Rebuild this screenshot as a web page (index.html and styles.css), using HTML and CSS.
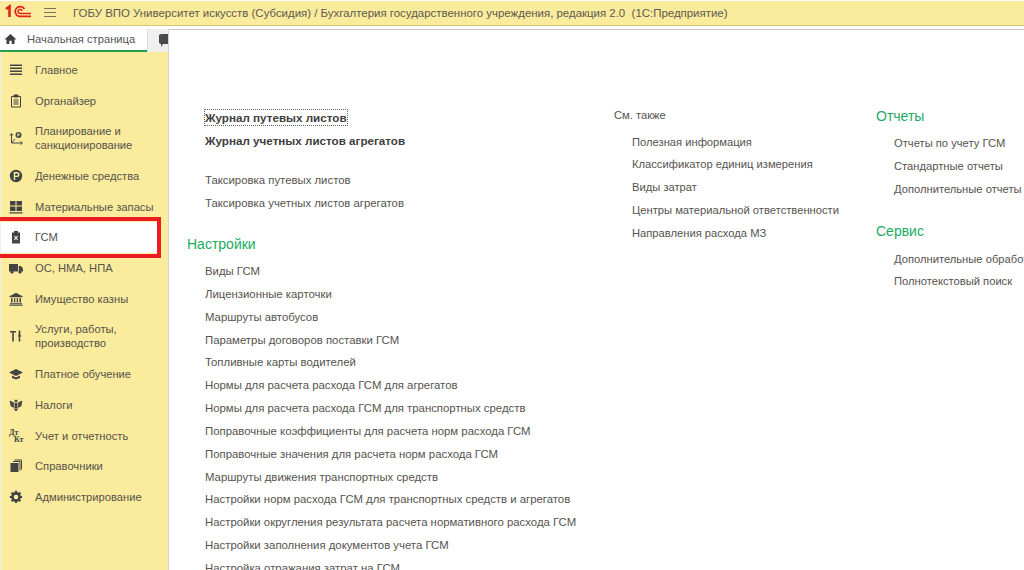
FILE: index.html
```html
<!DOCTYPE html>
<html lang="ru">
<head>
  <meta charset="UTF-8">
  <title>Бухгалтерия государственного учреждения</title>
  <link rel="stylesheet" href="styles.css">
</head>
<body>
  <header class="titlebar">
    <svg class="logo" width="27" height="17" viewBox="0 0 27 17" fill="none" stroke="#e2231a">
      <path d="M1 5 L4.5 2.5 V13" stroke-width="2.6"/>
      <path d="M19.5 5 A5 5 0 1 0 14 12.4 H26" stroke-width="1.7"/>
      <path d="M17 7 A2 2 0 1 0 14.5 9.4 H26" stroke-width="1.5"/>
    </svg>
    <svg class="burger" width="14" height="11" viewBox="0 0 14 11" stroke="#77725a" stroke-width="1.2">
      <path d="M1 1.5H13M1 5.5H13M1 9.5H13"/>
    </svg>
    <span class="title">ГОБУ ВПО Университет искусств (Субсидия) / Бухгалтерия государственного учреждения, редакция 2.0&nbsp; (1С:Предприятие)</span>
  </header>

  <div class="workspace">
    <aside class="left">
      <div class="tabs">
        <div class="tab-home">
          <svg width="13" height="12" viewBox="0 0 13 12" fill="#3f3f3f"><path d="M6.5 1 L12.5 6.5 H10.5 V11 H7.7 V7.8 H5.3 V11 H2.5 V6.5 H.5Z"/></svg>
          <span>Начальная страница</span>
        </div>
        <div class="tab-other">
          <svg width="10" height="15" viewBox="0 0 10 15" fill="#4a4a4a"><path d="M1 2 L3 1 H10 V11 H5 L3 14 V11 L1 10Z"/></svg>
        </div>
      </div>

      <nav class="sections">
        <a class="section">
          <svg viewBox="0 0 14 14" fill="#444"><path d="M1 1.5H13V3H1ZM1 4.5H13V6H1ZM1 7.5H13V9H1ZM1 10.5H13V12H1Z"/></svg>
          <span>Главное</span>
        </a>
        <a class="section">
          <svg viewBox="0 0 14 14" fill="none" stroke="#444" stroke-width="1"><path d="M2.5 2.5H11.5V13H2.5ZM4.5 6H9.5M4.5 8H9.5M4.5 10H9.5"/><path d="M5 1H9V3H5Z" fill="#444"/></svg>
          <span>Органайзер</span>
        </a>
        <a class="section">
          <svg viewBox="0 0 14 14" fill="none" stroke="#444" stroke-width="1"><path d="M2.5 3V12H13M1 4.5L2.5 2.5L4 4.5M11.5 10.5L13.5 12L11.5 13.5M2.5 12L6 8"/><circle cx="9.5" cy="4" r="3" fill="#444" stroke="none"/><path d="M8.7 5.6V2.8H10.3V4.2H8.7" stroke="#fbeb9c" stroke-width=".8"/></svg>
          <span>Планирование и<br>санкционирование</span>
        </a>
        <a class="section">
          <svg viewBox="0 0 14 14"><circle cx="7" cy="7" r="6.2" fill="#444"/><path d="M5.5 11V3.8H8A1.8 1.8 0 0 1 8 7.4H5.5" fill="none" stroke="#fbeb9c" stroke-width="1.4"/></svg>
          <span>Денежные средства</span>
        </a>
        <a class="section">
          <svg viewBox="0 0 14 14" fill="#444"><path d="M1 1H6.5V5.6H1ZM7.5 1H13V5.6H7.5ZM1 6.6H6.5V11H1ZM7.5 6.6H13V11H7.5ZM.5 12.2H13.5V13.4H.5Z"/></svg>
          <span>Материальные запасы</span>
        </a>
        <a class="section current">
          <svg viewBox="0 0 14 14"><path d="M3 2.5H5V1H9V2.5H11V13.5H3Z" fill="#444"/><path d="M5.3 6L8.7 10M8.7 6L5.3 10" stroke="#fff" stroke-width="1.1"/></svg>
          <span>ГСМ</span>
        </a>
        <a class="section">
          <svg viewBox="0 0 14 14" fill="#444"><path d="M0 3H9V10.5H0ZM9.8 5H12L14 7.4V10.5H9.8Z"/><circle cx="3" cy="11" r="1.6"/><circle cx="11" cy="11" r="1.6"/></svg>
          <span>ОС, НМА, НПА</span>
        </a>
        <a class="section">
          <svg viewBox="0 0 14 14" fill="#444"><path d="M7 .8L13.5 4.2V5.2H.5V4.2Z"/><path d="M2 6.2H3.6V10.5H2ZM5 6.2H6.3V10.5H5ZM7.7 6.2H9V10.5H7.7ZM10.4 6.2H12V10.5H10.4ZM1 11.2H13V12.2H1ZM.3 12.8H13.7V13.8H.3Z"/></svg>
          <span>Имущество казны</span>
        </a>
        <a class="section">
          <svg viewBox="0 0 14 14" fill="none" stroke="#444" stroke-width="1.6"><path d="M1 2.8H7M4 2.8V12.5M10.5 1.5V6M10.5 8.5V12.5"/><circle cx="10.5" cy="7" r="1.4" fill="#444" stroke="none"/></svg>
          <span>Услуги, работы,<br>производство</span>
        </a>
        <a class="section">
          <svg viewBox="0 0 14 14" fill="#444"><path d="M7 2L14 5.5L7 9L0 5.5ZM3 8.4L7 10.4L11 8.4V11L7 12.6L3 11Z"/></svg>
          <span>Платное обучение</span>
        </a>
        <a class="section">
          <svg viewBox="0 0 14 14" fill="#444"><path d="M5.6 1.2L7 2.6L8.4 1.2V4H5.6ZM.6 2.5L4.8 4.6V10L1.6 8ZM13.4 2.5L9.2 4.6V10L12.4 8ZM5.5 4.8H8.5V10H5.5ZM4.5 10.5H9.5L7 13.5Z"/></svg>
          <span>Налоги</span>
        </a>
        <a class="section">
          <span class="dtkt">Дт<br><i>Кт</i></span>
          <span>Учет и отчетность</span>
        </a>
        <a class="section">
          <svg viewBox="0 0 14 14"><path d="M5.5 1H12.5V10.5" fill="none" stroke="#444"/><path d="M4 2.5H11V11.5" fill="none" stroke="#444"/><path d="M1.5 4H9.5V13H1.5Z" fill="#444"/></svg>
          <span>Справочники</span>
        </a>
        <a class="section">
          <svg viewBox="0 0 14 14"><circle cx="7" cy="7" r="3.6" fill="none" stroke="#444" stroke-width="2.6"/><path d="M7 .8V13.2M.8 7H13.2M2.6 2.6L11.4 11.4M11.4 2.6L2.6 11.4" stroke="#444" stroke-width="2.2" stroke-dasharray="2.2 7.9"/></svg>
          <span>Администрирование</span>
        </a>
      </nav>
    </aside>

    <main class="content">
      <div class="col col-main">
        <div class="links">
          <a class="link strong focused">Журнал путевых листов</a>
          <a class="link strong">Журнал учетных листов агрегатов</a>
        </div>
        <div class="links gap-top">
          <a class="link">Таксировка путевых листов</a>
          <a class="link">Таксировка учетных листов агрегатов</a>
        </div>
        <h2 class="group settings">Настройки</h2>
        <div class="links">
          <a class="link">Виды ГСМ</a>
          <a class="link">Лицензионные карточки</a>
          <a class="link">Маршруты автобусов</a>
          <a class="link">Параметры договоров поставки ГСМ</a>
          <a class="link">Топливные карты водителей</a>
          <a class="link">Нормы для расчета расхода ГСМ для агрегатов</a>
          <a class="link">Нормы для расчета расхода ГСМ для транспортных средств</a>
          <a class="link">Поправочные коэффициенты для расчета норм расхода ГСМ</a>
          <a class="link">Поправочные значения для расчета норм расхода ГСМ</a>
          <a class="link">Маршруты движения транспортных средств</a>
          <a class="link">Настройки норм расхода ГСМ для транспортных средств и агрегатов</a>
          <a class="link">Настройки округления результата расчета нормативного расхода ГСМ</a>
          <a class="link">Настройки заполнения документов учета ГСМ</a>
          <a class="link">Настройка отражания затрат на ГСМ</a>
        </div>
      </div>

      <div class="col col-also">
        <div class="also-title">См. также</div>
        <div class="links">
          <a class="link">Полезная информация</a>
          <a class="link">Классификатор единиц измерения</a>
          <a class="link">Виды затрат</a>
          <a class="link">Центры материальной ответственности</a>
          <a class="link">Направления расхода МЗ</a>
        </div>
      </div>

      <div class="col col-reports">
        <h2 class="group reports">Отчеты</h2>
        <div class="links">
          <a class="link">Отчеты по учету ГСМ</a>
          <a class="link">Стандартные отчеты</a>
          <a class="link">Дополнительные отчеты</a>
        </div>
        <h2 class="group service">Сервис</h2>
        <div class="links">
          <a class="link">Дополнительные обработки</a>
          <a class="link">Полнотекстовый поиск</a>
        </div>
      </div>
    </main>
  </div>
</body>
</html>
```

FILE: styles.css
```css
* {
  box-sizing: border-box;
}

html, body {
  height: 100%;
}

body {
  margin: 0;
  overflow: hidden;
  background: #fff;
  color: #4a4a4a;
  font-family: "Liberation Sans", Arial, sans-serif;
  font-size: 11.36px;
}

.titlebar {
  display: flex;
  align-items: center;
  height: 26px;
  padding-bottom: 1px;
  background: #fbeb9c;
  border-top: 1px solid #fff;
  border-bottom: 1px solid #d8c873;
  color: #5c5a4e;
  font-size: 11.45px;
}

.logo {
  margin-left: 5px;
}

.burger {
  margin-left: 11px;
}

.title {
  margin-left: 16px;
  white-space: nowrap;
}

.workspace {
  display: flex;
  height: 544px;
  border-top: 3px solid #fff;
  box-shadow: inset 0 1px 0 #c9c9c9;
}

.left {
  display: flex;
  flex-direction: column;
  flex: none;
  width: 168px;
  font-size: 11.2px;
}

.tabs {
  display: flex;
  height: 23px;
  background: #f0f0f0;
}

.tab-home {
  display: flex;
  align-items: center;
  gap: 10px;
  width: 147px;
  padding: 0 0 2px 4px;
  background: #fff;
  border-bottom: 2px solid #1fa24f;
  color: #555;
}

.tab-other {
  display: flex;
  align-items: center;
  flex: 1;
  padding-left: 10px;
  border-left: 1px solid #dcdcdc;
}

.sections {
  flex: 1;
  padding-top: 2.6px;
  background: #fbeb9c;
  border-left: 1px solid #eee;
}

.section {
  position: relative;
  display: flex;
  align-items: center;
  gap: 12px;
  padding: 8.35px 0 8.35px 8px;
  line-height: 14px;
  color: #55534a;
}

.section svg,
.dtkt {
  flex: none;
  width: 14px;
  height: 14px;
}

.section.current {
  width: 156px;
  background: #fff;
}

/* red marker drawn over the screenshot */
.section.current::after {
  content: "";
  position: absolute;
  top: -5px;
  right: -4px;
  bottom: -5.5px;
  left: -1px;
  border: 4px solid #ec1c24;
  border-left: none;
}

.dtkt {
  font-family: "Liberation Serif", serif;
  font-size: 8px;
  font-weight: bold;
  line-height: 7px;
  color: #444;
}

.dtkt i {
  margin-left: 5px;
  font-style: normal;
}

.content {
  display: flex;
  flex: 1;
  min-width: 0;
  overflow: hidden;
  box-shadow: inset 1px 0 0 #d5d5d5;
}

.col {
  flex: none;
}

.col-main {
  width: 427px;
  margin-left: 19px;
  padding-top: 77px;
}

.col-also {
  width: 262px;
  padding-top: 78px;
  font-size: 11.2px;
}

.col-reports {
  padding-top: 77px;
  font-size: 11.2px;
  white-space: nowrap;
}

.links {
  display: flex;
  flex-direction: column;
  padding-left: 18px;
}

.link {
  align-self: flex-start;
  height: 22.85px;
  line-height: 22.85px;
  color: #55534f;
  white-space: nowrap;
}

.link.strong {
  font-size: 11.65px;
  font-weight: bold;
  color: #3e3e3e;
}

.focused {
  height: 17px;
  line-height: 15px;
  margin: 3px 0 4px;
  margin-left: -1px;
  border: 1px dotted #666;
}

.gap-top {
  margin-top: 16px;
}

.group {
  margin: 0;
  font-size: 14px;
  font-weight: normal;
  line-height: 20px;
  color: #21ab62;
}

.settings {
  margin-top: 19px;
  margin-bottom: 6.5px;
}

.reports {
  margin-bottom: 6px;
}

.service {
  margin-top: 20px;
  margin-bottom: 7px;
}

.also-title {
  height: 16px;
  margin-bottom: 7.5px;
  line-height: 16px;
  color: #55534f;
}
```
